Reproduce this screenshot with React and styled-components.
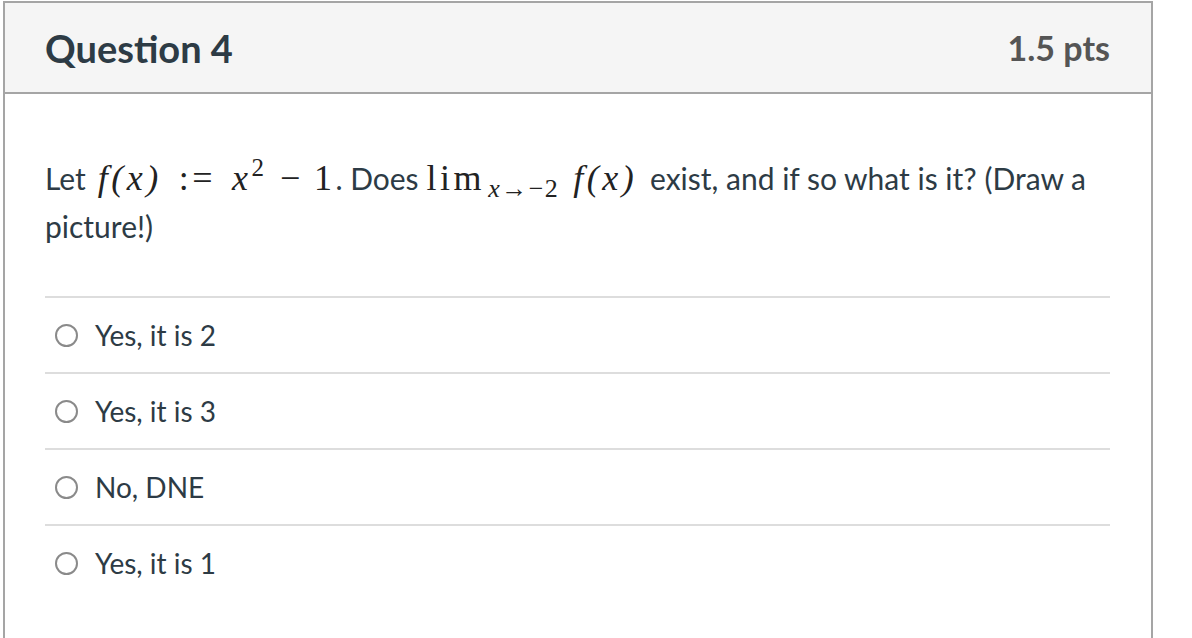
import styled, { createGlobalStyle } from 'styled-components'

const GlobalStyle = createGlobalStyle`
  body {
    margin: 0;
    background: #fff;
    font-family: Lato, "Open Sans", sans-serif;
    color: #2d3b45;
  }
`

const Card = styled.section`
  margin: 1px 0 0 3px;
  width: 1150px;
  height: 700px;
  box-sizing: border-box;
  border: 2px solid #a5a5a5;
  border-bottom: none;
`

const Header = styled.header`
  height: 91px;
  box-sizing: border-box;
  background: #f5f5f5;
  border-bottom: 2px solid #a5a5a5;
  padding: 0 41px 0 40px;
  display: flex;
  align-items: center;
  justify-content: space-between;
`

const Title = styled.h2`
  margin: 0;
  font-size: 38px;
  font-weight: 700;
  color: #2d3b45;
`

const Points = styled.div`
  font-size: 34px;
  font-weight: 700;
  color: #555;
`

const Body = styled.div`
  padding: 0 41px 0 40px;
`

const Prompt = styled.p`
  margin: 60px 0 46px;
  font-size: 30px;
  line-height: 48px;
`

// math pieces, spaced roughly like TeX output
const M = styled.span`
  font-family: "Liberation Serif", "DejaVu Serif", serif;
  font-size: 36px;
  letter-spacing: 3.5px;
  color: #222;
  font-style: ${p => (p.$up ? 'normal' : 'italic')};
  margin-left: ${p => p.$ml || 0}px;
  margin-right: ${p => p.$mr || 0}px;
`

const Sub = styled.sub`
  font-family: "Liberation Serif", "DejaVu Serif", serif;
  font-size: 26px;
  letter-spacing: 1.5px;
  color: #222;
  vertical-align: -7px;
  line-height: 0;
  margin-left: 3px;
`

const Sup = styled.sup`
  font-family: "Liberation Serif", "DejaVu Serif", serif;
  font-size: 25px;
  color: #222;
  vertical-align: 14px;
  line-height: 0;
`

const Options = styled.ul`
  list-style: none;
  margin: 0;
  padding: 0;
`

const Option = styled.li`
  height: 76px;
  box-sizing: border-box;
  border-top: 2px solid #dddddd;
  display: flex;
  align-items: center;
  gap: 17px;
  padding-left: 10px;
  font-size: 28px;
  color: #2d3b45;
`

const Radio = styled.span`
  width: 23px;
  height: 23px;
  box-sizing: border-box;
  border: 2px solid #8a8a8a;
  border-radius: 50%;
  flex: none;
`

const answers = ['Yes, it is 2', 'Yes, it is 3', 'No, DNE', 'Yes, it is 1']

export default function App() {
  return (
    <>
      <GlobalStyle />
      <Card>
        <Header>
          <Title>Question 4</Title>
          <Points>1.5 pts</Points>
        </Header>
        <Body>
          <Prompt>
            Let
            <M $ml={12}>f(x)</M>
            <M $up $ml={17}>:=</M>
            <M $ml={16}>x</M>
            <Sup>2</Sup>
            <M $up $ml={16}>−</M>
            <M $up $ml={10}>1</M>. Does
            <M $up $ml={8}>lim</M>
            <Sub><i>x</i>→−2</Sub>
            <M $ml={14} $mr={5}>f(x)</M> exist, and if so what is it? (Draw a
            picture!)
          </Prompt>
          <Options>
            {answers.map(a => (
              <Option key={a}>
                <Radio />
                {a}
              </Option>
            ))}
          </Options>
        </Body>
      </Card>
    </>
  )
}
